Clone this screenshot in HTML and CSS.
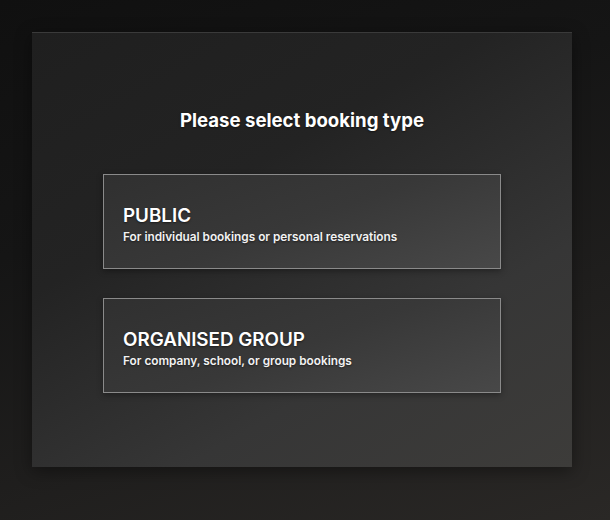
FILE: index.html
```html
<!DOCTYPE html>
<html lang="en">
<head>
    <meta charset="UTF-8">
    <meta name="viewport" content="width=device-width, initial-scale=1.0">
    <title>Booking type</title>
    <link rel="stylesheet" href="styles.css">
</head>
<body>
    <div class="booking-panel">
        <h1>Please select booking type</h1>
        <div class="type-list">
            <div class="type-card">
                <div class="type-name">PUBLIC</div>
                <div class="type-desc">For individual bookings or personal reservations</div>
            </div>
            <div class="type-card">
                <div class="type-name">ORGANISED GROUP</div>
                <div class="type-desc">For company, school, or group bookings</div>
            </div>
        </div>
    </div>
</body>
</html>
```

FILE: styles.css
```css
body {
    font-family: Inter, "Noto Sans", Arial, sans-serif;
    background: linear-gradient(160deg, #101010 0%, #151515 35%, #2a2826 100%);
    margin: 0;
    height: 520px;
    overflow: hidden;
    color: #fff;
}
.booking-panel {
    width: 540px;
    height: 435px;
    margin: 32px 0 0 32px;
    box-sizing: border-box;
    border-top: 1px solid #3a3a3a;
    background: linear-gradient(150deg, #1f1f1f 0%, #232323 35%, #363636 70%, #3d3c3a 100%);
    box-shadow: 0 4px 16px rgba(0, 0, 0, 0.4);
    padding-top: 75px;
}
h1 {
    margin: 0;
    font-size: 18.6px;
    line-height: 24px;
    font-weight: 700;
    text-align: center;
    text-shadow: 0 1px 2px rgba(0, 0, 0, 0.5);
}
.type-list {
    display: flex;
    flex-direction: column;
    gap: 29px;
    margin: 42px 0 0 71px;
}
.type-card {
    width: 398px;
    height: 95px;
    box-sizing: border-box;
    border: 1px solid #8a8a8a;
    background: linear-gradient(160deg, #303030 0%, #383838 50%, #484848 100%);
    box-shadow: 0 2px 6px rgba(0, 0, 0, 0.35);
    padding: 5px 19px 0;
    display: flex;
    flex-direction: column;
    justify-content: center;
}
.type-name {
    font-size: 18.8px;
    line-height: 24px;
    font-weight: 600;
    text-shadow: 0 1px 2px rgba(0, 0, 0, 0.5);
}
.type-desc {
    font-size: 11.8px;
    line-height: 16px;
    margin-top: 1px;
    font-weight: 600;
    color: #f2f2f2;
    text-shadow: 0 1px 2px rgba(0, 0, 0, 0.5);
}
```
